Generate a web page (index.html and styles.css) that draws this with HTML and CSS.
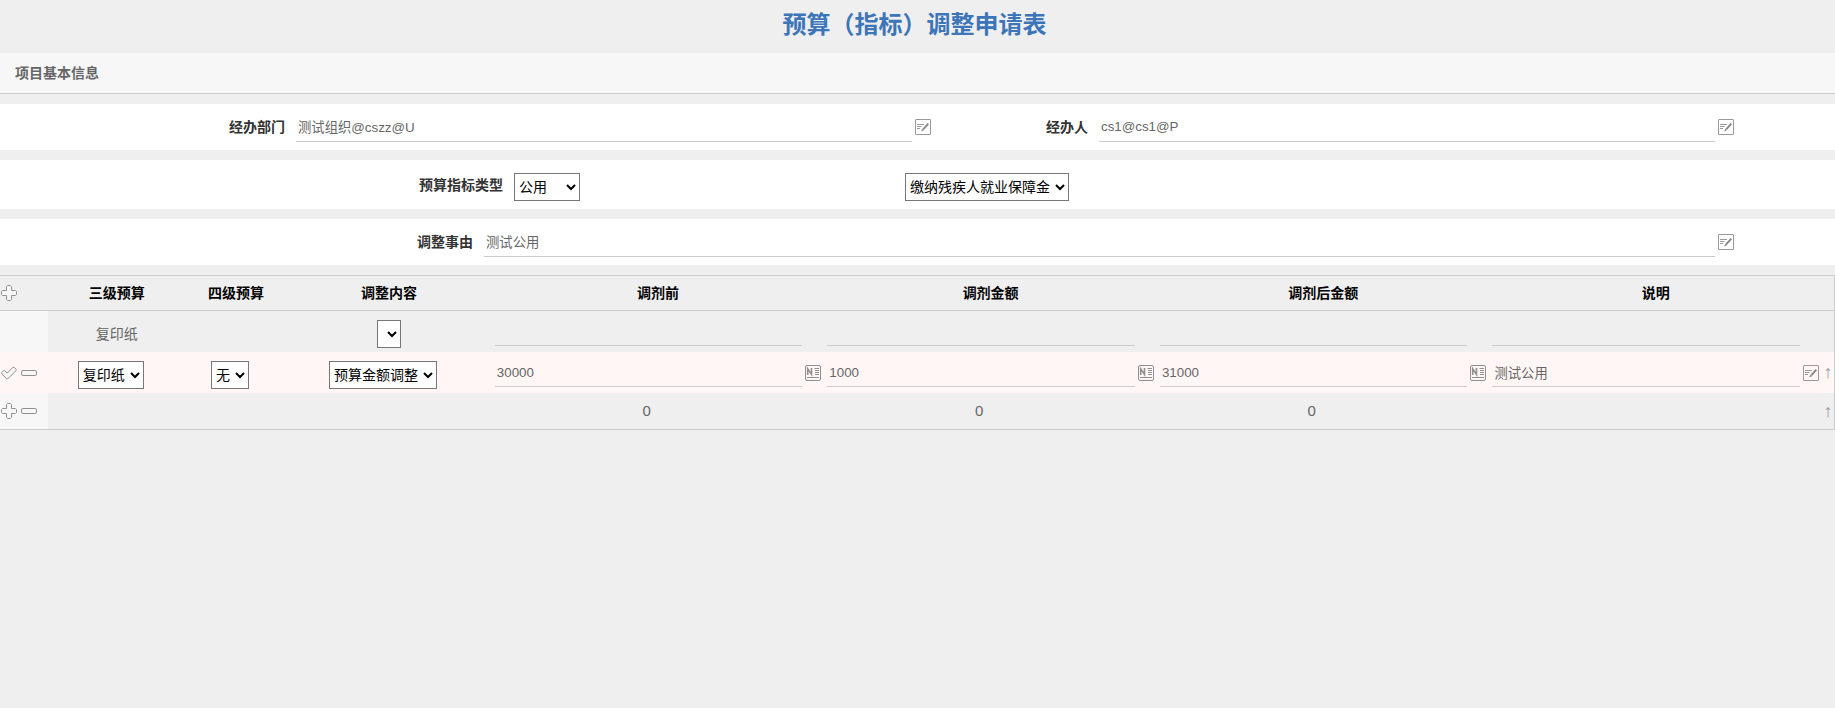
FILE: index.html
```html
<!DOCTYPE html>
<html lang="zh-CN">
<head>
  <meta charset="UTF-8">
  <title>预算（指标）调整申请表</title>
  <meta name="viewport" content="width=device-width, initial-scale=1.0">
  <link rel="stylesheet" href="styles.css">
</head>
<body>
  <svg class="sprite" aria-hidden="true">
    <symbol id="icon-edit" viewBox="0 0 16 16">
      <rect x="0.5" y="0.5" width="15" height="15" rx="0.5" fill="none" stroke="#999"/>
      <path d="M2 5.5h7M2 7.5h4.5M2 9.5h3" fill="none" stroke="#999"/>
      <path d="M13.3 4.6L8.2 10.4" fill="none" stroke="#888" stroke-width="2"/>
      <path d="M7.2 9.7l1.8 1.6-2.8 1.1z" fill="#888"/>
    </symbol>
    <symbol id="icon-num" viewBox="0 0 16 16">
      <rect x="0.5" y="0.5" width="15" height="15" rx="1.5" fill="none" stroke="#909090"/>
      <path d="M2.7 10V3.8L6.5 9.4V3" fill="none" stroke="#909090" stroke-width="1.6"/>
      <path d="M9.5 3.5H14M10 5.5h4M10 7.5h4M10 9.5h4M2 12.5h12" fill="none" stroke="#909090"/>
    </symbol>
    <symbol id="icon-plus" viewBox="0 0 16 16">
      <path d="M6.5 0.5h3l1 1v4h4l1 1v3l-1 1h-4v4l-1 1h-3l-1-1v-4h-4l-1-1v-3l1-1h4v-4z" fill="#f7f7f7" stroke="#909090" stroke-linejoin="round"/>
    </symbol>
    <symbol id="icon-minus" viewBox="0 0 16 16">
      <rect x="0.5" y="5.5" width="15" height="5" rx="1.5" fill="#f7f7f7" stroke="#909090"/>
    </symbol>
    <symbol id="icon-check" viewBox="0 0 16 16">
      <path d="M0.7 7.6l2-2 1 .1 2.5 2.4 5.7-5.8h1.2l2 2v1.2l-8.2 8.2-1.2.1L.8 9z" fill="#f7f7f7" stroke="#909090" stroke-linejoin="round"/>
    </symbol>
  </svg>

  <h1 class="title">预算（指标）调整申请表</h1>
  <h2 class="section-bar">项目基本信息</h2>

  <form>
    <div class="form-row row-two">
      <label for="dept">经办部门</label>
      <div class="field">
        <input id="dept" type="text" value="测试组织@cszz@U">
        <button type="button" class="icon-btn" aria-label="编辑经办部门"><svg><use href="#icon-edit"/></svg></button>
      </div>
      <label for="person">经办人</label>
      <div class="field">
        <input id="person" type="text" value="cs1@cs1@P">
        <button type="button" class="icon-btn" aria-label="编辑经办人"><svg><use href="#icon-edit"/></svg></button>
      </div>
    </div>

    <div class="form-row row-type">
      <label for="type">预算指标类型</label>
      <div>
        <select id="type">
          <option>公用</option>
          <option>项目类</option>
        </select>
      </div>
      <div>
        <select aria-label="预算指标">
          <option>缴纳残疾人就业保障金</option>
        </select>
      </div>
    </div>

    <div class="form-row row-one">
      <label for="reason">调整事由</label>
      <div class="field">
        <input id="reason" type="text" value="测试公用">
        <button type="button" class="icon-btn" aria-label="编辑调整事由"><svg><use href="#icon-edit"/></svg></button>
      </div>
    </div>

    <table class="detail">
      <colgroup>
        <col class="col-tools">
        <col class="col-third">
        <col class="col-fourth">
        <col class="col-content">
        <col>
        <col>
        <col>
        <col>
        <col class="col-move">
      </colgroup>
      <thead>
        <tr>
          <td class="tools">
            <div class="tool-list">
              <button type="button" class="icon-btn" aria-label="新增"><svg><use href="#icon-plus"/></svg></button>
            </div>
          </td>
          <th>三级预算</th>
          <th>四级预算</th>
          <th>调整内容</th>
          <th>调剂前</th>
          <th>调剂金额</th>
          <th>调剂后金额</th>
          <th>说明</th>
          <td></td>
        </tr>
      </thead>
      <tbody>
        <tr class="data-row">
          <td class="tools"></td>
          <td class="text-cell">复印纸</td>
          <td></td>
          <td class="select-cell empty"><select aria-label="调整内容"><option></option></select></td>
          <td><div class="field blank"><input type="text" aria-label="调剂前"></div></td>
          <td><div class="field blank"><input type="text" aria-label="调剂金额"></div></td>
          <td><div class="field blank"><input type="text" aria-label="调剂后金额"></div></td>
          <td><div class="field blank"><input type="text" aria-label="说明"></div></td>
          <td></td>
        </tr>
        <tr class="data-row active">
          <td class="tools">
            <div class="tool-list">
              <button type="button" class="icon-btn" aria-label="确认"><svg><use href="#icon-check"/></svg></button>
              <button type="button" class="icon-btn" aria-label="删除"><svg><use href="#icon-minus"/></svg></button>
            </div>
          </td>
          <td class="select-cell"><select aria-label="三级预算"><option>复印纸</option></select></td>
          <td class="select-cell"><select aria-label="四级预算"><option>无</option></select></td>
          <td class="select-cell"><select aria-label="调整内容"><option>预算金额调整</option></select></td>
          <td>
            <div class="field">
              <input type="text" value="30000" aria-label="调剂前">
              <button type="button" class="icon-btn" aria-label="输入调剂前"><svg><use href="#icon-num"/></svg></button>
            </div>
          </td>
          <td>
            <div class="field">
              <input type="text" value="1000" aria-label="调剂金额">
              <button type="button" class="icon-btn" aria-label="输入调剂金额"><svg><use href="#icon-num"/></svg></button>
            </div>
          </td>
          <td>
            <div class="field">
              <input type="text" value="31000" aria-label="调剂后金额">
              <button type="button" class="icon-btn" aria-label="输入调剂后金额"><svg><use href="#icon-num"/></svg></button>
            </div>
          </td>
          <td>
            <div class="field">
              <input type="text" value="测试公用" aria-label="说明">
              <button type="button" class="icon-btn" aria-label="编辑说明"><svg><use href="#icon-edit"/></svg></button>
            </div>
          </td>
          <td class="move"><button type="button" class="move-btn">↑</button></td>
        </tr>
      </tbody>
      <tfoot>
        <tr>
          <td class="tools">
            <div class="tool-list">
              <button type="button" class="icon-btn" aria-label="新增"><svg><use href="#icon-plus"/></svg></button>
              <button type="button" class="icon-btn" aria-label="删除"><svg><use href="#icon-minus"/></svg></button>
            </div>
          </td>
          <td></td>
          <td></td>
          <td></td>
          <td class="sum">0</td>
          <td class="sum">0</td>
          <td class="sum">0</td>
          <td></td>
          <td class="move"><button type="button" class="move-btn">↑</button></td>
        </tr>
      </tfoot>
    </table>
  </form>
</body>
</html>
```
FILE: styles.css
```css
* {
  box-sizing: border-box;
}

body {
  margin: 0;
  font-family: "Liberation Sans", "Noto Sans CJK SC", sans-serif;
  font-size: 14px;
  line-height: 20px;
  color: #666;
  background: #efefef;
}

.sprite {
  display: none;
}

.title {
  margin: 0;
  padding: 9px 6px 12px 0;
  font-size: 24px;
  line-height: 32px;
  text-align: center;
  color: #3c75b8;
}

.section-bar {
  margin: 0 0 10px;
  padding: 10px 15px;
  font-size: 14px;
  line-height: 20px;
  background: #f7f7f7;
  border-bottom: 1px solid #ccc;
}

/* form rows */
.form-row {
  display: grid;
  align-items: center;
  margin-bottom: 10px;
  padding: 8px 0;
  background: #fff;
}

.row-two {
  grid-template-columns: 296fr 638fr 165fr 635fr 101fr;
}

.row-type {
  grid-template-columns: 514fr 391fr 930fr;
}

.row-type select {
  margin-top: 5px;
}

.row-one {
  grid-template-columns: 484fr 1250fr 101fr;
}

.form-row label {
  padding-right: 11px;
  font-weight: bold;
  text-align: right;
  color: #333;
}

.field {
  display: flex;
  align-items: center;
  gap: 3px;
}

.row-two .field:nth-child(2) {
  padding-right: 3px;
}

input {
  flex: 1;
  min-width: 0;
  height: 30px;
  padding: 0 2px;
  font-family: inherit;
  color: #666;
  background: transparent;
  border: none;
  border-bottom: 1px solid #ccc;
  border-radius: 0;
}

select {
  display: block;
  height: 28px;
  padding: 0 2px 0 0;
  font-family: inherit;
  font-size: 14px;
  color: #000;
  background-color: #fff;
}

button {
  padding: 0;
  background: none;
  border: none;
  cursor: pointer;
}

.icon-btn {
  flex: none;
  width: 16px;
  height: 16px;
}

.icon-btn svg {
  display: block;
  width: 16px;
  height: 16px;
}

/* detail table */
.detail {
  width: 100%;
  table-layout: fixed;
  border-collapse: separate;
  border-spacing: 0;
  border: 1px solid #ccc;
  border-left: none;
}

.col-tools {
  width: 48px;
}

.col-third {
  width: 7.5%;
}

.col-fourth {
  width: 5.5%;
}

.col-content {
  width: 11.2%;
}

.col-move {
  width: 12px;
}

.detail th,
.detail td {
  padding: 0 3px;
  text-align: center;
}

.detail thead th,
.detail thead td {
  height: 35px;
  color: #000;
  border-bottom: 1px solid #ccc;
}

.data-row td {
  height: 41px;
}

.detail tfoot td {
  height: 36px;
}

.detail .tools {
  padding: 0 1px;
}

tbody .tools,
tfoot .tools {
  background: #f7f7f7;
}

.active td,
.active .tools {
  background: #fff6f5;
}

.tool-list {
  display: flex;
  gap: 4px;
}

.detail .field input {
  height: 29px;
}

.detail .field.blank {
  padding-right: 19px;
}

.detail .text-cell {
  padding-top: 5px;
}

.detail .select-cell {
  padding: 5px 12px 0 0;
}

.detail .select-cell.empty {
  padding-right: 0;
}

.select-cell select {
  margin: 0 auto;
}

.detail .sum {
  padding-right: 26px;
  font-size: 15px;
}

.detail .move {
  padding: 0;
}

.move-btn {
  font-family: "Liberation Sans", sans-serif;
  font-size: 18px;
  line-height: 20px;
  color: #999;
}
```
